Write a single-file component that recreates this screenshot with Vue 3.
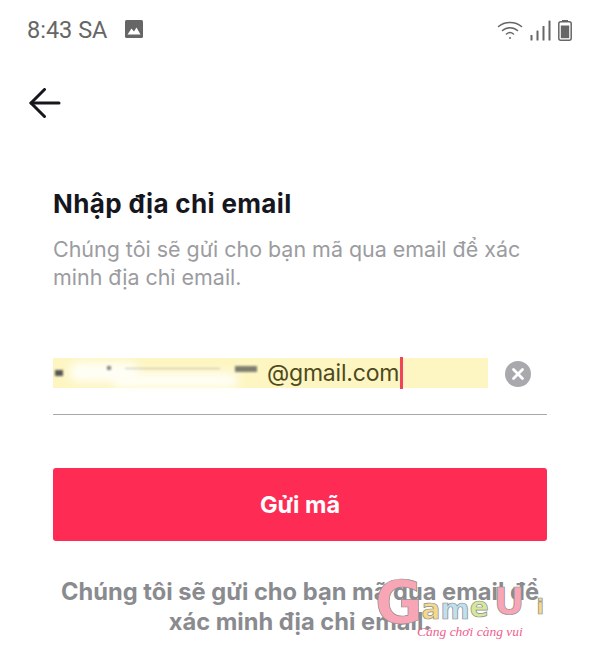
<script setup>
const title = 'Nhập địa chỉ email'
</script>

<template>
  <div class="screen">
    <header class="status">
      <div class="status-left">
        <span class="time">8:43 SA</span>
        <svg class="pic" viewBox="0 0 18 18" width="18" height="18">
          <rect x="0" y="0" width="18" height="18" rx="1.5" fill="#666" />
          <path d="M2.5 14.5 L6.5 8.5 L9 11.5 L11.5 7.5 L15.5 14.5 Z" fill="#fff" />
        </svg>
      </div>
      <div class="status-right">
        <svg width="26" height="20" viewBox="0 0 26 20" fill="none" stroke="#666" stroke-width="1.5" stroke-linecap="round">
          <path d="M1.5 6.5 C7.5 1 18.5 1 24.5 6.5" />
          <path d="M5.5 10.5 C9.5 6.8 16.5 6.8 20.5 10.5" />
          <path d="M9.5 14 C11.5 12.4 14.5 12.4 16.5 14" />
          <circle cx="13" cy="18" r="1" fill="#666" stroke="none" />
        </svg>
        <svg width="21" height="21" viewBox="0 0 21 21" fill="#666">
          <rect x="0.5" y="15" width="2" height="5.5" rx="0.6" />
          <rect x="6.5" y="10.5" width="2" height="10" rx="0.6" />
          <rect x="12.5" y="6" width="2" height="14.5" rx="0.6" />
          <rect x="18.5" y="0.5" width="2" height="20" rx="0.6" />
        </svg>
        <svg width="14" height="21" viewBox="0 0 14 21">
          <rect x="4" y="0" width="6" height="2" fill="#666" />
          <rect x="0.8" y="1.8" width="12.4" height="18.4" rx="2" fill="none" stroke="#666" stroke-width="1.5" />
          <rect x="2.8" y="5.5" width="8.4" height="12.7" fill="#666" />
        </svg>
      </div>
    </header>

    <button class="back" aria-label="Quay lại">
      <svg width="32" height="30" viewBox="0 0 32 30" fill="none" stroke="#16161e" stroke-width="3" stroke-linecap="round" stroke-linejoin="round">
        <path d="M30 15 H2" />
        <path d="M15.5 1.5 L2 15 L15.5 28.5" />
      </svg>
    </button>

    <main class="content">
      <h1 class="title">{{ title }}</h1>
      <p class="desc">Chúng tôi sẽ gửi cho bạn mã qua email để xác<br />minh địa chỉ email.</p>

      <div class="field">
        <div class="input">
          <span class="erased">
            <span class="smudge w1"></span>
            <span class="smudge w2"></span>
            <span class="speck s1"></span>
            <span class="speck s2"></span>
            <span class="speck s3"></span>
            <span class="speck s4"></span>
          </span>
          <span class="value">@gmail.com</span><span class="caret"></span>
        </div>
        <svg class="clear" width="26" height="26" viewBox="0 0 26 26">
          <circle cx="13" cy="13" r="13" fill="#a9a9ad" />
          <path d="M8.5 8.5 L17.5 17.5 M17.5 8.5 L8.5 17.5" stroke="#fff" stroke-width="2.8" stroke-linecap="round" />
        </svg>
      </div>

      <button class="send">Gửi mã</button>

      <p class="note">Chúng tôi sẽ gửi cho bạn mã qua email để<br />xác minh địa chỉ email.</p>
    </main>

    <div class="logo">
      <span class="g">G</span><span class="a">a</span><span class="m">m</span><span class="e">e</span><span class="u">U</span><span class="i">i</span>
      <span class="tag">Càng chơi càng vui</span>
    </div>
  </div>
</template>

<style>
html, body { margin: 0; background: #fff; }
</style>

<style scoped>
.screen {
  position: relative;
  width: 600px;
  height: 654px;
  overflow: hidden;
  background: #fff;
  font-family: Inter, Lato, sans-serif;
}
.status {
  display: flex;
  justify-content: space-between;
  align-items: center;
  height: 60px;
  padding: 0 28px 0 27px;
  box-sizing: border-box;
}
.status-left { display: flex; align-items: center; gap: 18px; }
.time {
  font-family: Roboto, sans-serif;
  font-size: 23.5px;
  color: #666;
}
.pic { margin-top: -2px; }
.status-right { display: flex; align-items: center; gap: 7px; }
.back {
  display: block;
  margin: 28px 0 0 29px;
  padding: 0;
  height: 30px;
  border: 0;
  background: none;
}
.content {
  padding: 0 53px;
}
.title {
  margin: 70px 0 0;
  font-size: 26px;
  letter-spacing: 0.35px;
  line-height: 32px;
  font-weight: 700;
  color: #16161e;
}
.desc {
  margin: 15px 0 0;
  font-size: 21.45px;
  line-height: 28px;
  color: #9b9ca0;
  white-space: nowrap;
}
.field {
  display: flex;
  align-items: flex-start;
  height: 56px;
  margin-top: 67px;
  border-bottom: 1px solid #a8a8a8;
}
.input {
  position: relative;
  display: flex;
  align-items: center;
  width: 435px;
  height: 30px;
  background: #fdf6c3;
  white-space: nowrap;
}
.erased {
  position: relative;
  flex: none;
  width: 214px;
  height: 30px;
}
.value {
  font-size: 23px;
  color: #4d4a20;
  letter-spacing: -0.2px;
}
.caret {
  width: 3px;
  height: 32px;
  margin-left: 1px;
  background: #f0445a;
  flex: none;
}
.smudge {
  position: absolute;
  background: #fffef6;
  filter: blur(5px);
  border-radius: 10px;
}
.w1 { left: 16px; top: 4px; width: 70px; height: 20px; }
.w2 { left: 60px; top: 15px; width: 125px; height: 15px; }
.speck {
  position: absolute;
  background: #555;
  filter: blur(1px);
}
.s1 { left: 2px; top: 12px; width: 8px; height: 6px; }
.s2 { left: 54px; top: 8px; width: 4px; height: 4px; opacity: 0.7; }
.s3 { left: 72px; top: 10px; width: 95px; height: 1px; opacity: 0.35; }
.s4 { left: 182px; top: 8px; width: 22px; height: 6px; opacity: 0.75; }
.clear { margin: 3px 0 0 17px; flex: none; }
.send {
  display: block;
  width: 100%;
  height: 73px;
  margin-top: 53px;
  border: 0;
  border-radius: 3px;
  background: #fe2c55;
  color: #fff;
  font-family: inherit;
  font-size: 23.5px;
  font-weight: 700;
}
.note {
  margin: 36px -10px 0;
  font-size: 23.7px;
  line-height: 30px;
  font-weight: 700;
  text-align: center;
  color: #8a8b8f;
  white-space: nowrap;
}
.logo {
  position: absolute;
  left: 375px;
  top: 564px;
  width: 190px;
  height: 70px;
  font-family: "DejaVu Sans", sans-serif;
  font-weight: 700;
  display: flex;
  align-items: flex-end;
  -webkit-text-stroke: 0.7px #8d8d8d;
}
.logo span { display: block; }
.logo .g { font-size: 58px; line-height: 62px; color: #f8a5b5; margin-right: -1px; }
.logo .a { font-size: 28px; line-height: 48px; color: #f4d98a; }
.logo .m { font-size: 28px; line-height: 48px; color: #bfe0ee; }
.logo .e { font-size: 28px; line-height: 52px; color: #d6e89a; }
.logo .u { font-size: 38px; line-height: 66px; color: #f8a5b5; margin-left: 5px; }
.logo .i { font-size: 22px; line-height: 54px; color: #f4d98a; margin-left: 12px; }
.logo .tag {
  position: absolute;
  left: 42px;
  top: 60px;
  font-family: "Liberation Serif", serif;
  font-style: italic;
  font-size: 13.5px;
  font-weight: 400;
  color: #f0608c;
  -webkit-text-stroke: 0;
  white-space: nowrap;
}
</style>
